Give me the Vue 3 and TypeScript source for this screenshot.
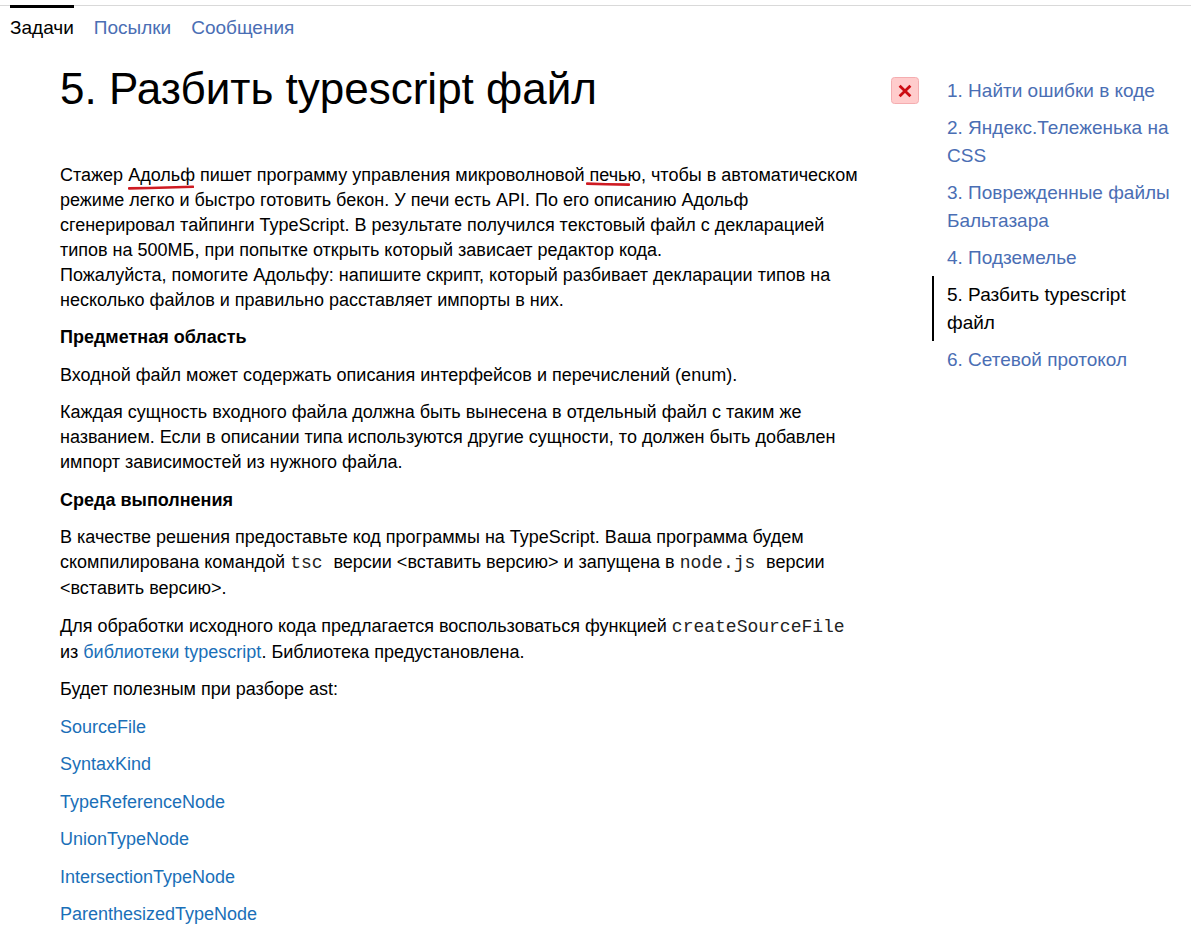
<script setup lang="ts">
interface NavItem {
  label: string
  active?: boolean
  failed?: boolean
}

const tabs: NavItem[] = [
  { label: 'Задачи', active: true },
  { label: 'Посылки' },
  { label: 'Сообщения' },
]

const problems: NavItem[] = [
  { label: '1. Найти ошибки в коде', failed: true },
  { label: '2. Яндекс.Тележенька на CSS' },
  { label: '3. Поврежденные файлы Бальтазара' },
  { label: '4. Подземелье' },
  { label: '5. Разбить typescript файл', active: true },
  { label: '6. Сетевой протокол' },
]

const references: string[] = [
  'SourceFile',
  'SyntaxKind',
  'TypeReferenceNode',
  'UnionTypeNode',
  'IntersectionTypeNode',
  'ParenthesizedTypeNode',
]
</script>

<template>
  <div class="page">
    <nav class="tabs">
      <a
        v-for="tab in tabs"
        :key="tab.label"
        href="#"
        class="tab"
        :class="{ 'tab-active': tab.active }"
      >{{ tab.label }}</a>
    </nav>

    <div class="layout">
      <main class="problem">
        <h1 class="title">5. Разбить typescript файл</h1>
        <div class="statement">
          <p>
            Стажер <span class="marked">Адольф<svg class="stroke" viewBox="0 0 66 5" preserveAspectRatio="none" aria-hidden="true"><path d="M1 3.4 L22 3 L65 1.8" /></svg></span>
            пишет программу управления микроволновой
            <span class="marked">печью<svg class="stroke stroke-short" viewBox="0 0 44 5" preserveAspectRatio="none" aria-hidden="true"><path d="M1 1.6 L20 2.2 L43 2.6" /></svg></span>,
            чтобы в автоматическом режиме легко и быстро готовить бекон. У печи есть API. По его
            описанию Адольф сгенерировал тайпинги TypeScript. В результате получился текстовый
            файл с декларацией типов на 500МБ, при попытке открыть который зависает редактор
            кода.<br>
            Пожалуйста, помогите Адольфу: напишите скрипт, который разбивает декларации типов на
            несколько файлов и правильно расставляет импорты в них.
          </p>
          <h2>Предметная область</h2>
          <p>Входной файл может содержать описания интерфейсов и перечислений (enum).</p>
          <p>
            Каждая сущность входного файла должна быть вынесена в отдельный файл с таким же
            названием. Если в описании типа используются другие сущности, то должен быть добавлен
            импорт зависимостей из нужного файла.
          </p>
          <h2>Среда выполнения</h2>
          <p>
            В качестве решения предоставьте код программы на TypeScript. Ваша программа будем
            скомпилирована командой <code>tsc&nbsp;</code>версии &lt;вставить версию&gt; и
            запущена в <code>node.js&nbsp;</code>версии &lt;вставить версию&gt;.
          </p>
          <p>
            Для обработки исходного кода предлагается воспользоваться функцией
            <code>createSourceFile</code> из <a href="#">библиотеки typescript</a>. Библиотека
            предустановлена.
          </p>
          <p>Будет полезным при разборе ast:</p>
          <p v-for="name in references" :key="name"><a href="#">{{ name }}</a></p>
        </div>
      </main>

      <aside class="sidebar">
        <ol class="problems">
          <li v-for="problem in problems" :key="problem.label" class="problem-row">
            <span class="status">
              <svg v-if="problem.failed" class="badge" viewBox="0 0 28 27" role="img" aria-label="Не решена">
                <rect x="0.5" y="0.5" width="27" height="26" rx="3" fill="#ffcccc" stroke="#f4adb0" />
                <path d="M8.6 8.8 L19.4 19.2 M19.4 8.8 L8.6 19.2" stroke="#cc0c12" stroke-width="2.8" fill="none" />
              </svg>
            </span>
            <a href="#" class="problem-link" :class="{ 'problem-active': problem.active }">{{ problem.label }}</a>
          </li>
        </ol>
      </aside>
    </div>
  </div>
</template>

<style>
body {
  margin: 0;
  background: #fff;
}
</style>

<style scoped>
.page {
  padding-top: 5px;
  font-family: "Liberation Sans", Arial, sans-serif;
  font-size: 18px;
  line-height: 25px;
  color: #000;
}
a {
  color: #1a6fb8;
  text-decoration: none;
}
.tabs {
  display: flex;
  gap: 20px;
  padding: 0 10px;
  border-top: 1px solid #d9d9d9;
}
.tab {
  margin-top: -1px;
  padding-top: 8px;
  border-top: 3px solid transparent;
  font-size: 19px;
  line-height: 24px;
  color: #4a6eb4;
}
.tab-active {
  border-top-color: #000;
  color: #000;
}
.layout {
  display: flex;
  align-items: flex-start;
  gap: 28px;
  padding-left: 60px;
}
.problem {
  flex: 1;
  min-width: 0;
}
.title {
  margin: 23px 0 48px;
  font-size: 44px;
  line-height: 52px;
  font-weight: 400;
}
.statement > * {
  margin: 0 0 12px;
}
.statement > :nth-child(even) {
  margin-bottom: 13px;
}
.statement > :last-child {
  margin-bottom: 0;
}
h2 {
  font-size: 18px;
  line-height: 25px;
  font-weight: 700;
}
code {
  font-family: "Liberation Mono", "Courier New", monospace;
  font-size: 18px;
  color: #222;
}
.marked {
  position: relative;
}
.stroke {
  position: absolute;
  left: 0;
  bottom: -5px;
  width: 66px;
  height: 5px;
  fill: none;
  stroke: #cf1b22;
  stroke-width: 2.6;
  stroke-linecap: round;
}
.stroke-short {
  left: -4px;
  bottom: -2px;
  width: 44px;
}
.sidebar {
  flex: 0 0 300px;
}
.problems {
  margin: 32px 0 0;
  padding: 0;
  list-style: none;
}
.problem-row {
  display: flex;
  gap: 13px;
}
.status {
  flex: 0 0 28px;
}
.badge {
  display: block;
  width: 28px;
  height: 27px;
  margin-top: 5px;
}
.problem-link {
  padding: 5px 20px 4px 13px;
  border-left: 2px solid transparent;
  font-size: 19px;
  line-height: 28px;
  color: #4a6eb4;
}
.problem-active {
  border-left-color: #000;
  color: #000;
}
</style>
